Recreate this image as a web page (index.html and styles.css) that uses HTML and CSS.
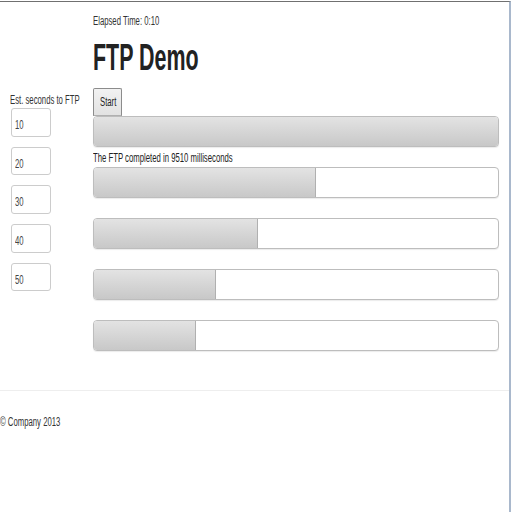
FILE: index.html
```html
<!DOCTYPE html>
<html>
<head>
<meta charset="utf-8">
<title>FTP Demo</title>
<link rel="stylesheet" href="styles.css">
</head>
<body>
<div class="page">
  <div class="main">
    <aside class="side">
      <div class="label"><span class="cond">Est. seconds to FTP</span></div>
      <div class="field"><span class="cond">10</span></div>
      <div class="field"><span class="cond">20</span></div>
      <div class="field"><span class="cond">30</span></div>
      <div class="field"><span class="cond">40</span></div>
      <div class="field"><span class="cond">50</span></div>
    </aside>
    <section class="content">
      <div class="elapsed"><span class="cond">Elapsed Time: 0:10</span></div>
      <h1 class="title"><span class="cond narrow">FTP Demo</span></h1>
      <button class="btn"><span class="cond">Start</span></button>
      <div class="progress"><div class="bar full" style="width:100%"></div></div>
      <div class="msg"><span class="cond">The FTP completed in 9510 milliseconds</span></div>
      <div class="progress"><div class="bar" style="width:55%"></div></div>
      <div class="progress spaced"><div class="bar" style="width:40.5%"></div></div>
      <div class="progress spaced"><div class="bar" style="width:30.3%"></div></div>
      <div class="progress spaced"><div class="bar" style="width:25.3%"></div></div>
    </section>
  </div>
  <hr class="rule">
  <footer class="foot"><span class="cond">© Company 2013</span></footer>
</div>
</body>
</html>
```

FILE: styles.css
```css
html, body {
  margin: 0;
  padding: 0;
  background: #ffffff;
}
body {
  font-family: "Liberation Sans", Arial, sans-serif;
  font-size: 12px;
  line-height: 16px;
  color: #333333;
}
.page {
  width: 511px;
  height: 511px;
  margin-top: 1px;
  border-top: 1px solid #707070;
  border-right: 2px solid #a9b8cc;
  box-sizing: border-box;
}
.cond {
  display: inline-block;
  white-space: nowrap;
  transform: scaleX(0.645);
  transform-origin: 0 0;
}
.cond.narrow {
  transform: scaleX(0.595);
}
.main {
  display: flex;
}
.side {
  width: 93px;
  padding-top: 90px;
  box-sizing: border-box;
}
.label {
  padding-left: 10px;
  height: 16px;
}
.field {
  margin-left: 11px;
  width: 40px;
  height: 28.5px;
  box-sizing: border-box;
  border: 1px solid #cccccc;
  border-radius: 3px;
  padding: 8px 0 0 3px;
  margin-bottom: 10.2px;
  color: #444444;
}
.content {
  width: 406px;
  padding-top: 11px;
}
.elapsed {
  height: 16px;
}
.title {
  margin: 9px 0 10px 0;
  font-size: 36px;
  line-height: 40px;
  font-weight: bold;
  color: #222222;
}
.btn {
  display: block;
  width: 29px;
  height: 28px;
  margin: 0;
  padding: 0 0 0 6px;
  text-align: left;
  font-family: inherit;
  font-size: 12px;
  line-height: 16px;
  color: #222222;
  background: linear-gradient(#f2f2f2, #e2e2e2);
  border: 1px solid #8c8c8c;
  border-bottom-color: #b0b0b0;
  border-radius: 2px 2px 0 0;
  box-sizing: border-box;
}
.progress {
  height: 31px;
  box-sizing: border-box;
  border: 1px solid #bdbdbd;
  border-radius: 4px;
  overflow: hidden;
  background: #ffffff;
  box-shadow: 0 1px 1px rgba(0, 0, 0, 0.08);
}
.progress.spaced {
  margin-top: 20px;
}
.bar {
  height: 100%;
  background: linear-gradient(#e3e3e3, #c8c8c8);
  box-shadow: inset -1px 0 0 #b0b0b0;
}
.bar.full {
  box-shadow: none;
}
.msg {
  margin: 3px 0 1px 0;
  height: 16px;
  color: #222222;
}
.rule {
  margin: 39px 0 0 0;
  border: 0;
  border-top: 1px solid #eeeeee;
  height: 0;
}
.foot {
  margin-top: 23px;
  height: 16px;
}
```
